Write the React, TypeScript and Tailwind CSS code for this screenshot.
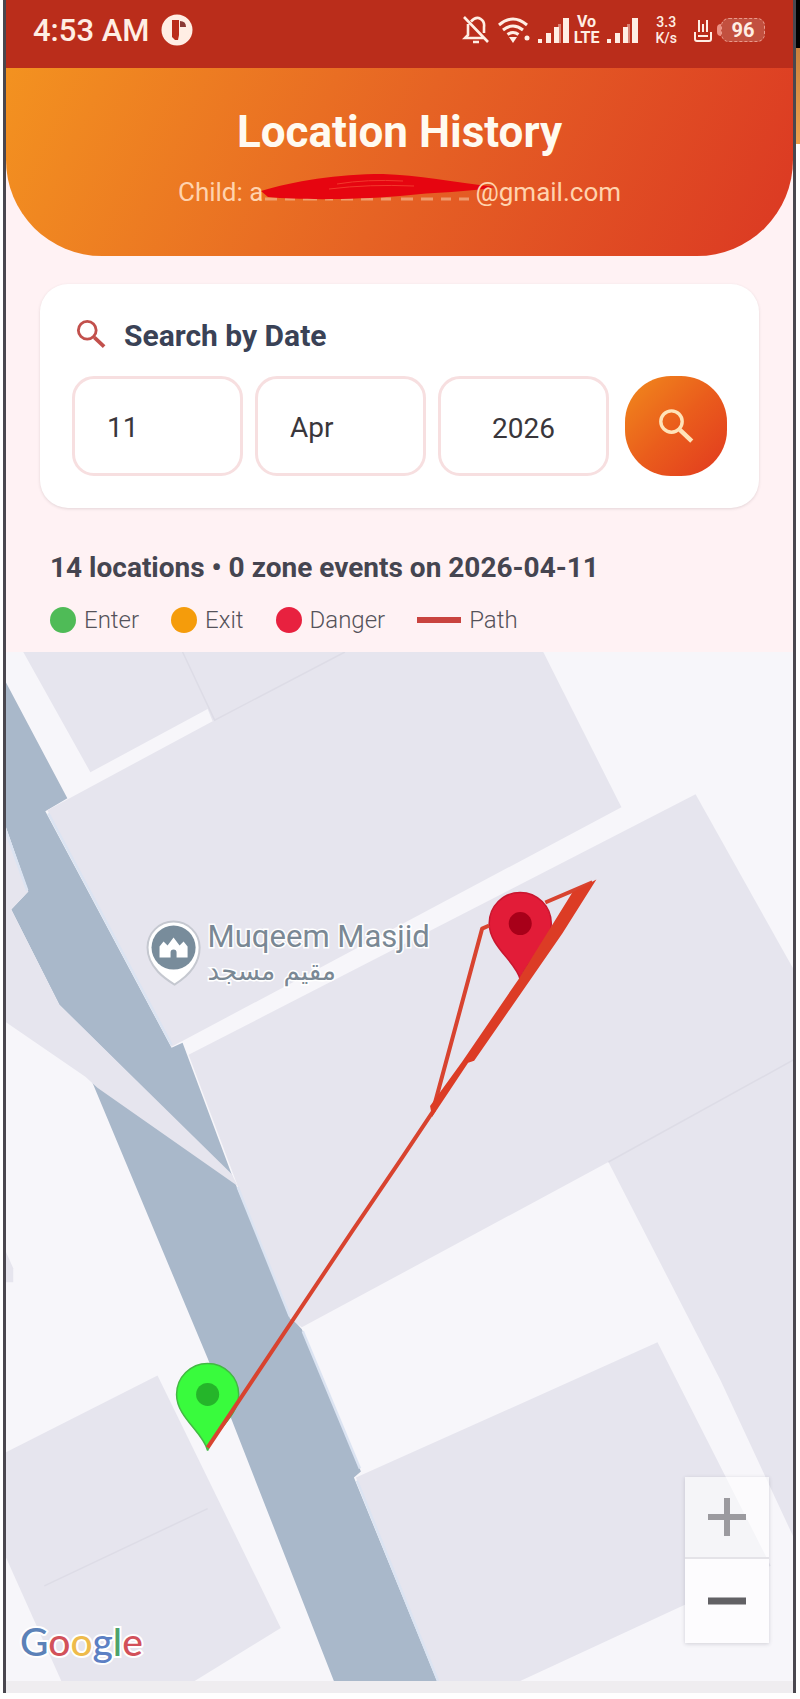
import { useState } from "react";

const days = Array.from({ length: 31 }, (_, i) => String(i + 1));
const months = ["Jan", "Feb", "Mar", "Apr", "May", "Jun", "Jul", "Aug", "Sep", "Oct", "Nov", "Dec"];

const legend = [
  { label: "Enter", color: "bg-[#4fbb57]" },
  { label: "Exit", color: "bg-[#f59c0b]" },
  { label: "Danger", color: "bg-[#e8213f]" },
];

function SearchIcon({ className }: { className: string }) {
  return (
    <svg viewBox="0 0 32 32" fill="none" stroke="currentColor" className={className} aria-hidden="true">
      <circle cx="12" cy="12" r="9.5" strokeWidth="3" />
      <path d="M19.5 19.5L30 29.5" strokeWidth="4" />
    </svg>
  );
}

function SignalIcon() {
  return (
    <svg viewBox="0 0 32 28" fill="currentColor" className="h-7 w-8" aria-hidden="true">
      <rect x="0" y="23" width="4" height="4" />
      <rect x="8" y="17" width="5" height="10" />
      <rect x="16" y="11" width="5" height="16" />
      <rect x="20" y="8" width="3" height="19" opacity="0.45" />
      <rect x="25" y="2" width="6" height="25" />
    </svg>
  );
}

function StatusBar() {
  return (
    <div className="flex h-17 items-center justify-between bg-[#ba2d1b] pr-7 pb-2 pl-[27px] text-[#ffeee4]">
      <div className="flex items-center gap-3">
        <span className="text-[31px] leading-none font-medium">4:53 AM</span>
        <svg viewBox="0 0 32 32" className="size-8" aria-hidden="true">
          <circle cx="16" cy="16" r="15.5" fill="currentColor" />
          <path d="M11 6h7v15l-1 5h-3l-3-3z" fill="#ba2d1b" />
          <path d="M19 7q6 0 6 6h-6z" fill="#8a3a35" />
        </svg>
      </div>
      <div className="flex items-center">
        <svg viewBox="0 0 28 30" fill="none" stroke="currentColor" strokeWidth="2.6" className="mr-2 h-[30px] w-7" aria-hidden="true">
          <path d="M9 6.500C16-1 23 5 22 12v6M6 9v11l-3 3h19M11 27h6M2 2l24 25" />
        </svg>
        <svg viewBox="0 0 32 28" fill="none" stroke="currentColor" strokeWidth="3" className="mr-2 h-7 w-8" aria-hidden="true">
          <path d="M1 9Q15-3 29 9M5 14q10-8 20 0M9.500 18.500q5.500-4 11 0" />
          <path d="M11 21h8l-4 6z" fill="currentColor" stroke="none" />
          <circle cx="29" cy="22" r="2.500" fill="currentColor" stroke="none" />
        </svg>
        <SignalIcon />
        <span className="mr-2 ml-1 flex flex-col items-center text-[16px] leading-4 font-bold">
          <span>Vo</span>
          <span>LTE</span>
        </span>
        <SignalIcon />
        <span className="mx-4 flex flex-col items-center text-[14px] leading-4 font-medium">
          <span>3.3</span>
          <span>K/s</span>
        </span>
        <svg viewBox="0 0 20 28" fill="none" stroke="currentColor" strokeWidth="2" className="mr-1 h-7 w-5" aria-hidden="true">
          <path d="M6 4v12M14 4v12M10 8v8M2 16v7q0 2 2 2h12q2 0 2-2v-7M5 20h10" />
        </svg>
        <span className="h-3 w-1 rounded-l bg-[#ec8f82]" />
        <span className="flex h-6 w-11 items-center justify-center rounded-lg border border-dashed border-[#e99a8c] bg-[#c2503f] text-[20px] leading-none font-bold">
          96
        </span>
      </div>
    </div>
  );
}

function Header() {
  return (
    <header className="flex h-47 flex-col items-center rounded-b-[96px] bg-linear-[115deg] from-[#f39220] via-[#e66324] to-[#db3823] pt-9">
      <h1 className="text-[44px] leading-[56px] font-bold text-[#fffaf0]">Location History</h1>
      <p className="mt-4 flex items-center text-[26px] leading-8 text-[#ffd3ae]">
        <span>Child: a</span>
        <svg viewBox="0 0 212 32" className="h-8 w-[212px] overflow-visible" aria-hidden="true">
          <path
            d="M2 23h12M22 23h10M40 23h14M62 23h8M78 23h12M98 23h12M118 23h10M138 23h12M158 23h12M178 23h10M196 23h10"
            stroke="#f3b58c"
            strokeWidth="3"
            opacity="0.7"
          />
          <path d="M-2 15C30 5 75-2 120-2c35 1 70 8 112 13-25 5-60 5-95 9-50 4-100 4-132 1z" fill="#e60510" />
          <path d="M66 13q40-5 85-3M74 8q30-5 66-3" fill="none" stroke="#f2382c" strokeWidth="1" />
        </svg>
        <span>@gmail.com</span>
      </p>
    </header>
  );
}

function SearchCard() {
  const [day, setDay] = useState("11");
  const [month, setMonth] = useState("Apr");
  const [year, setYear] = useState("2026");
  const field =
    "h-[100px] w-full min-w-0 appearance-none rounded-[22px] border-3 border-[#f7dfe0] bg-white pt-1 text-[28px] text-[#39363b] outline-none";

  return (
    <form
      onSubmit={(e) => e.preventDefault()}
      className="mx-[34px] mt-7 rounded-[28px] bg-white px-8 pt-8 pb-8 shadow-[0_1px_3px_rgba(90,60,70,0.16)]"
    >
      <h2 className="flex items-center gap-[18px] text-[30px] leading-10 font-bold text-[#3a4256]">
        <SearchIcon className="mb-1 ml-1 size-[30px] text-[#c2504c]" />
        Search by Date
      </h2>
      <div className="mt-5 flex items-center gap-4">
        <div className="grid flex-1 grid-cols-3 gap-3">
          <select aria-label="Day" value={day} onChange={(e) => setDay(e.target.value)} className={`${field} pl-8`}>
            {days.map((d) => (
              <option key={d}>{d}</option>
            ))}
          </select>
          <select aria-label="Month" value={month} onChange={(e) => setMonth(e.target.value)} className={`${field} pl-8`}>
            {months.map((m) => (
              <option key={m}>{m}</option>
            ))}
          </select>
          <input
            aria-label="Year"
            inputMode="numeric"
            value={year}
            onChange={(e) => setYear(e.target.value)}
            className={`${field} text-center`}
          />
        </div>
        <button
          type="submit"
          aria-label="Search"
          className="flex h-[100px] w-[102px] shrink-0 items-center justify-center rounded-[46px] bg-linear-[135deg] from-[#f18a1c] via-[#ea5d1c] to-[#e1391f]"
        >
          <SearchIcon className="size-9 text-[#ffe3b8]" />
        </button>
      </div>
    </form>
  );
}

function Pin({ x, y, fill, edge, dot }: { x: number; y: number; fill: string; edge: string; dot: string }) {
  return (
    <g transform={`translate(${x} ${y})`}>
      <path
        d="M0 0C-4-18-31-33-31-56A31 31 0 0 1 31-56C31-33 4-18 0 0z"
        fill={fill}
        stroke={edge}
        strokeWidth="1.500"
      />
      <circle cy="-56" r="11.500" fill={dot} />
    </g>
  );
}

function MapView() {
  return (
    <div className="relative min-h-[480px] flex-1 overflow-hidden bg-[#f7f6fa]">
      <svg
        viewBox="6 653 787 1027"
        preserveAspectRatio="xMidYMid slice"
        className="absolute inset-0 size-full"
        role="img"
        aria-label="Map of visited locations"
      >
        {/* road */}
        <g fill="#a9b8ca">
          <path d="M6 682L68 799 46 812 172 1048 183 1043 233 1177 60 1005 12 910 29 892 6 826z" />
          <path d="M91 1078L235 1182 292 1318 302 1329 361 1471 354 1477 437 1680H334L208 1358z" />
        </g>
        {/* buildings */}
        <g fill="#e6e5ee">
          <path d="M24 653H345L213 722 208 710 91 773z" />
          <path d="M48 811L213 722 345 653H543L621 808 172 1047z" />
          <path d="M6 826L29 892 12 910 60 1005 232 1174 238 1186 98 1088 86 1077 6 1022z" />
          <path d="M189 1055L695 795 793 970V1060L608 1162 302 1327 290 1318 238 1186z" />
          <path d="M608 1162L793 1060V1537L720 1380z" />
          <path d="M356 1477L657 1342 770 1565 680 1606 520 1680H437z" />
          <path d="M6 1452L158 1375 281 1627 195 1680H62L6 1555z" />
          <path d="M6 1250l8 18v14H6z" />
        </g>
        <g fill="none" stroke="#dddce6" strokeWidth="1.500">
          <path d="M183 653L215 721 345 653" />
          <path d="M793 1060L608 1162" />
          <path d="M45 1585L208 1508" />
        </g>
        <g fill="none" stroke="#dce4f2" strokeWidth="2.500">
          <path d="M49 814L172 1045" />
          <path d="M6 830L28 891" />
          <path d="M238 1187L290 1316" />
          <path d="M303 1331L360 1468" />
          <path d="M357 1480L438 1680" />
        </g>

        {/* place label */}
        <path
          d="M175 985c-8-5-27-17-27-37a26 26 0 0 1 52 0c0 20-17 32-25 37z"
          fill="#fff"
          stroke="#c5c8d0"
          strokeWidth="2"
        />
        <circle cx="174" cy="948" r="22" fill="#788c9b" />
        <path d="M160 958v-11l4-5 4 4 6-8 6 8 4-4 4 5v11h-11v-5a3 3 0 0 0-6 0v5z" fill="#fff" />
        <g fill="#7a8894" stroke="#fff" strokeWidth="3" paintOrder="stroke">
          <text x="208" y="947" fontSize="31" className="font-[Roboto]">
            Muqeem Masjid
          </text>
          <text x="208" y="980" fontSize="26" className="font-['DejaVu_Sans']">
            مقیم مسجد
          </text>
        </g>

        <Pin x={520} y={980} fill="#e21c38" edge="#c8172f" dot="#a80019" />
        <Pin x={208} y={1450} fill="#39fb3d" edge="#43b944" dot="#25b52a" />

        {/* travelled path */}
        <g fill="none" stroke="#d8432f" strokeLinejoin="round">
          <path d="M208 1447L353 1230 402 1158 434 1110" strokeWidth="4" />
          <path d="M433 1110L482 929 489 926M545 903L592 883" strokeWidth="4" />
        </g>
        <path d="M596 880L562 934 474 1061 468 1063 432 1117 430 1106 462 1062 518 980 572 893z" fill="#dc3c25" />
      </svg>

      <div
        aria-label="Google"
        className="absolute bottom-5 left-[14px] font-[Lato] text-[39px] leading-10 font-medium [-webkit-text-stroke:4px_white] [paint-order:stroke_fill]"
      >
        <span className="text-[#5c82b8]">G</span>
        <span className="text-[#d2515a]">o</span>
        <span className="text-[#eebb4b]">o</span>
        <span className="text-[#5c80c4]">g</span>
        <span className="text-[#4ea36b]">l</span>
        <span className="text-[#d2515a]">e</span>
      </div>

      <div className="absolute right-6 bottom-[38px] flex w-[84px] flex-col bg-white/60 shadow-[0_1px_4px_rgba(60,60,80,0.2)]">
        <button type="button" aria-label="Zoom in" className="flex h-[82px] items-center justify-center border-b-2 border-[#e4e3e8]">
          <svg viewBox="0 0 38 38" stroke="#9b9a9f" strokeWidth="6" className="size-[38px]" aria-hidden="true">
            <path d="M19 0v38M0 19h38" />
          </svg>
        </button>
        <button type="button" aria-label="Zoom out" className="flex h-[84px] items-center justify-center bg-[#fdfcfe]">
          <svg viewBox="0 0 38 38" stroke="#626165" strokeWidth="7" className="size-[38px]" aria-hidden="true">
            <path d="M0 19h38" />
          </svg>
        </button>
      </div>
    </div>
  );
}

export default function App() {
  return (
    <div className="flex min-h-screen bg-white pl-[3px] font-[Roboto,sans-serif]">
      <div className="mb-[6px] flex min-w-0 flex-1 flex-col border-x-3 border-[#4a474f] bg-[#fff2f4]">
        <StatusBar />
        <Header />
        <SearchCard />
        <section className="mt-11 px-11 pb-4">
          <p className="text-[28px] leading-8 font-bold text-[#454550]">
            14 locations • 0 zone events on 2026-04-11
          </p>
          <ul className="mt-5 flex items-center gap-8 text-[24px] leading-8 font-light text-[#55525a]">
            {legend.map((item) => (
              <li key={item.label} className="flex items-center gap-2">
                <span className={`size-[26px] rounded-full ${item.color}`} />
                {item.label}
              </li>
            ))}
            <li className="flex items-center gap-2">
              <span className="h-[6px] w-11 bg-[#c9443f]" />
              Path
            </li>
          </ul>
        </section>
        <MapView />
        <div className="h-3 bg-[#efedf0]" />
      </div>
      {/* sliver of the neighbouring screen */}
      <div className="flex w-1 flex-col" aria-hidden="true">
        <div className="h-12 bg-black" />
        <div className="h-24 bg-linear-to-b from-[#c9803c] to-[#eda14d]" />
      </div>
    </div>
  );
}
